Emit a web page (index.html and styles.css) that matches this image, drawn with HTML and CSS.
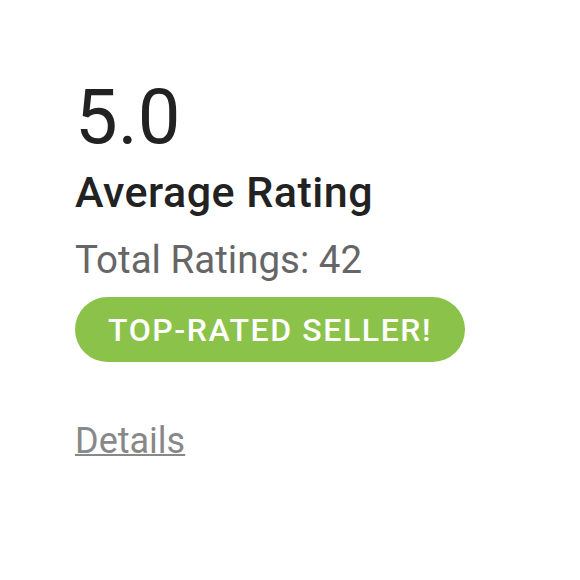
FILE: index.html
```html
<!DOCTYPE html>
<html lang="en">
<head>
    <meta charset="UTF-8">
    <title>Rating Summary</title>
    <link rel="stylesheet" href="styles.css">
</head>
<body>
    <div class="rating-card">
        <div class="score">5.0</div>
        <h2 class="title">Average Rating</h2>
        <p class="total">Total Ratings: 42</p>
        <span class="badge">TOP-RATED SELLER!</span>
        <a class="details" href="#">Details</a>
    </div>
</body>
</html>
```
FILE: styles.css
```css
body {
    margin: 0;
    font-family: Roboto, 'Liberation Sans', sans-serif;
    background: #ffffff;
}

.rating-card {
    display: flex;
    flex-direction: column;
    align-items: flex-start;
    padding: 72px 75px;
}

.score {
    font-size: 76px;
    line-height: 90px;
    color: #222;
}

.title {
    margin: 5px 0 0;
    font-size: 43px;
    font-weight: 500;
    line-height: 50px;
    letter-spacing: 0.5px;
    color: #222;
}

.total {
    margin: 20px 0 0;
    font-size: 38.5px;
    line-height: 46px;
    color: #666;
}

.badge {
    margin-top: 14px;
    padding: 0 33px;
    height: 65px;
    display: flex;
    align-items: center;
    background: #8bc34a;
    border-radius: 33px;
    color: #fff;
    font-size: 32px;
    font-weight: 500;
    letter-spacing: 1.6px;
}

.details {
    margin-top: 58px;
    font-size: 36px;
    color: #888;
    text-decoration-thickness: 2px;
}
```
